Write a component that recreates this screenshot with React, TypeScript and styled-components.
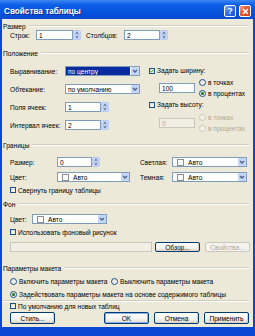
import styled, { createGlobalStyle } from 'styled-components';

const GlobalStyle = createGlobalStyle`
  html, body {
    margin: 0;
    padding: 0;
    background: #fff;
  }
`;

const Window = styled.div`
  width: 255px;
  height: 336px;
  display: flex;
  flex-direction: column;
  background: #0a47d2;
  overflow: hidden;
  font-family: 'Liberation Sans', Arial, sans-serif;
  font-size: 6.6px;
  color: #000;
`;

const TitleBar = styled.div`
  height: 19px;
  flex: none;
  box-sizing: border-box;
  display: flex;
  align-items: center;
  gap: 3px;
  padding: 3px 4px 0 4px;
  background: linear-gradient(#3d86f4 0%, #0d5fe7 25%, #0554de 60%, #0a4bd2 100%);
`;

const Title = styled.span`
  flex: 1;
  color: #fff;
  font-weight: bold;
  font-size: 8.2px;
  text-shadow: 1px 1px 0 #0a2a8a;
`;

const CaptionButton = styled.div<{ $close?: boolean }>`
  width: 12px;
  height: 12px;
  box-sizing: border-box;
  border: 1px solid #fff;
  border-radius: 2px;
  background: ${({ $close }) =>
    $close
      ? 'linear-gradient(135deg, #f2a088 0%, #e35a36 45%, #c7391a 100%)'
      : 'linear-gradient(135deg, #8ab6ff 0%, #2f6fe9 45%, #1552d6 100%)'};
  display: flex;
  align-items: center;
  justify-content: center;
  color: #fff;
  font-weight: bold;
  font-size: 9px;
  line-height: 1;
`;

// 본문: 좌우/하단 파란 프레임은 Window 배경이 비쳐 보이도록 margin으로 처리
const Body = styled.div`
  flex: 1;
  margin: 0 2px 9px 2px;
  padding: 3px 4px 0 1px;
  background: #ece9d8;
  display: flex;
  flex-direction: column;
`;

const GroupHeader = styled.div<{ $mt: number }>`
  height: 8px;
  margin-top: ${({ $mt }) => $mt}px;
  display: flex;
  align-items: center;
  gap: 3px;
  white-space: nowrap;

  &::after {
    content: '';
    flex: 1;
    border-top: 1px solid #d0cfbf;
    border-bottom: 1px solid #fff;
  }
`;

const Separator = styled.div<{ $mt: number }>`
  margin-top: ${({ $mt }) => $mt}px;
  border-top: 1px solid #d0cfbf;
  border-bottom: 1px solid #fff;
`;

const Row = styled.div<{ $mt?: number; $h: number; $indent?: number }>`
  height: ${({ $h }) => $h}px;
  margin-top: ${({ $mt }) => $mt ?? 0}px;
  padding-left: ${({ $indent }) => $indent ?? 7}px;
  display: flex;
  align-items: center;
  white-space: nowrap;
`;

const Label = styled.span<{ $w?: number; $disabled?: boolean }>`
  width: ${({ $w }) => ($w ? `${$w}px` : 'auto')};
  flex: none;
  color: ${({ $disabled }) => ($disabled ? '#aca899' : '#000')};
`;

const FormGrid = styled.div<{ $cols: string; $gap: number; $mt: number }>`
  margin-top: ${({ $mt }) => $mt}px;
  padding-left: 7px;
  display: grid;
  grid-template-columns: ${({ $cols }) => $cols};
  grid-auto-rows: 10px;
  row-gap: ${({ $gap }) => $gap}px;
  align-items: center;
  white-space: nowrap;
`;

const PositionSection = styled.div`
  margin-top: 9px;
  display: flex;
  align-items: flex-start;
`;

const SideColumn = styled.div`
  margin-left: 9px;
  display: flex;
  flex-direction: column;
`;

const SizeBlock = styled.div<{ $mt: number }>`
  height: 22px;
  margin-top: ${({ $mt }) => $mt}px;
  padding-left: 10px;
  display: flex;
  align-items: center;
  gap: 4px;
`;

const RadioStack = styled.div`
  display: flex;
  flex-direction: column;
`;

const TextBox = styled.div<{ $w: number; $disabled?: boolean }>`
  width: ${({ $w }) => $w}px;
  height: 10px;
  flex: none;
  box-sizing: border-box;
  border: 1px solid ${({ $disabled }) => ($disabled ? '#c9c7ba' : '#7f9db9')};
  background: ${({ $disabled }) => ($disabled ? '#f1efe4' : '#fff')};
  color: ${({ $disabled }) => ($disabled ? '#aca899' : '#000')};
  padding-left: 2px;
  display: flex;
  align-items: center;
  white-space: nowrap;
`;

const NumberWrap = styled.div`
  display: flex;
  align-items: center;
  flex: none;
`;

const SpinnerIcon = () => (
  <svg width="8" height="10" viewBox="0 0 8 10">
    <rect x="0.5" y="0.5" width="7" height="4.3" rx="1.2" fill="#c9d8fb" stroke="#b2c6f0" />
    <rect x="0.5" y="5.2" width="7" height="4.3" rx="1.2" fill="#c9d8fb" stroke="#b2c6f0" />
    <path d="M2.2 3.6 L4 1.8 L5.8 3.6 Z" fill="#4d6185" />
    <path d="M2.2 6.4 L4 8.2 L5.8 6.4 Z" fill="#4d6185" />
  </svg>
);

const NumberField = ({ value, width }: { value: string; width: number }) => (
  <NumberWrap>
    <TextBox $w={width}>{value}</TextBox>
    <SpinnerIcon />
  </NumberWrap>
);

const SelectBox = styled.div<{ $w: number }>`
  width: ${({ $w }) => $w}px;
  height: 10px;
  flex: none;
  box-sizing: border-box;
  border: 1px solid #7f9db9;
  background: #fff;
  display: flex;
  align-items: stretch;
`;

const SelectValue = styled.div<{ $selected?: boolean }>`
  flex: 1;
  margin: 0 1px 0 0;
  padding-left: 2px;
  display: flex;
  align-items: center;
  gap: 4px;
  background: ${({ $selected }) => ($selected ? '#0b2ba0' : 'transparent')};
  color: ${({ $selected }) => ($selected ? '#fff' : '#000')};
  white-space: nowrap;
  overflow: hidden;
`;

const Swatch = styled.span`
  width: 5px;
  height: 5px;
  margin-left: 2px;
  border: 1px solid #8d8d8d;
  background: #fff;
  flex: none;
`;

const DropIcon = () => (
  <svg width="8" height="8" viewBox="0 0 8 8">
    <rect x="0.3" y="0.3" width="7.4" height="7.4" rx="1.2" fill="#c4d5fa" stroke="#b7c9f1" strokeWidth="0.6" />
    <path d="M2 3 L4 5 L6 3" fill="none" stroke="#4d6185" strokeWidth="1.3" />
  </svg>
);

const Select = ({ value, width, selected }: { value: string; width: number; selected?: boolean }) => (
  <SelectBox $w={width}>
    <SelectValue $selected={selected}>{value}</SelectValue>
    <DropIcon />
  </SelectBox>
);

const ColorSelect = ({ width }: { width: number }) => (
  <SelectBox $w={width}>
    <SelectValue>
      <Swatch />
      Авто
    </SelectValue>
    <DropIcon />
  </SelectBox>
);

const CheckBox = styled.span`
  width: 6px;
  height: 6px;
  flex: none;
  box-sizing: border-box;
  border: 1px solid #1c5180;
  background: linear-gradient(135deg, #dcdcd7, #fff);
  margin-right: 2px;
  display: flex;
  align-items: center;
  justify-content: center;
`;

const Check = ({ label, checked }: { label: string; checked?: boolean }) => (
  <>
    <CheckBox>
      {checked && (
        <svg width="4" height="4" viewBox="0 0 4 4">
          <path d="M0.4 2 L1.5 3.1 L3.6 0.7" fill="none" stroke="#21a121" strokeWidth="1" />
        </svg>
      )}
    </CheckBox>
    <Label>{label}</Label>
  </>
);

const RadioCircle = styled.span<{ $checked?: boolean; $disabled?: boolean }>`
  width: 7px;
  height: 7px;
  flex: none;
  box-sizing: border-box;
  border-radius: 50%;
  border: 1px solid ${({ $disabled }) => ($disabled ? '#cac8bb' : '#1c5180')};
  background: ${({ $disabled }) => ($disabled ? '#f3f2ea' : 'linear-gradient(135deg, #dcdcd7, #fff)')};
  margin-right: 2px;
  display: flex;
  align-items: center;
  justify-content: center;

  &::after {
    content: '';
    width: 3px;
    height: 3px;
    border-radius: 50%;
    background: ${({ $checked }) => ($checked ? '#1f6f1f' : 'transparent')};
  }
`;

const RadioOption = styled.div<{ $w?: number; $h?: number }>`
  width: ${({ $w }) => ($w ? `${$w}px` : 'auto')};
  height: ${({ $h }) => ($h ? `${$h}px` : 'auto')};
  display: flex;
  align-items: center;
  white-space: nowrap;
`;

const Radio = ({
  label,
  checked,
  disabled,
  width,
  height,
}: {
  label: string;
  checked?: boolean;
  disabled?: boolean;
  width?: number;
  height?: number;
}) => (
  <RadioOption $w={width} $h={height}>
    <RadioCircle $checked={checked} $disabled={disabled} />
    <Label $disabled={disabled}>{label}</Label>
  </RadioOption>
);

const PushButton = styled.button<{ $h: number; $default?: boolean }>`
  width: 45px;
  height: ${({ $h }) => $h}px;
  flex: none;
  box-sizing: border-box;
  padding: 0;
  margin: 0;
  font: inherit;
  color: #000;
  border: 1px solid #003c74;
  border-radius: 2px;
  background: linear-gradient(#ffffff 0%, #f4f3ee 60%, #dcd8cf 100%);
  box-shadow: ${({ $default }) => ($default ? 'inset 0 0 0 1px #8cb0f0' : 'inset -1px -1px 0 #d6d0c5')};
  display: flex;
  align-items: center;
  justify-content: center;

  &:disabled {
    color: #aca899;
    border-color: #c9c7ba;
    background: #f4f3ee;
    box-shadow: none;
  }
`;

const ButtonGroup = styled.div`
  display: flex;
  gap: 5px;
  margin-left: auto;
`;

const FieldRow = styled(Row)`
  gap: 3px;
`;

const App = () => {
  return (
    <>
      <GlobalStyle />
      <Window>
        <TitleBar>
          <Title>Свойства таблицы</Title>
          <CaptionButton>?</CaptionButton>
          <CaptionButton $close>
            <svg width="7" height="7" viewBox="0 0 7 7">
              <path d="M1 1 L6 6 M6 1 L1 6" stroke="#fff" strokeWidth="1.6" />
            </svg>
          </CaptionButton>
        </TitleBar>

        <Body>
          <GroupHeader $mt={0}>Размер</GroupHeader>
          <Row $h={10}>
            <Label $w={26}>Строк:</Label>
            <NumberField value="1" width={37} />
            <Label $w={38} style={{ marginLeft: 5 }}>
              Столбцов:
            </Label>
            <NumberField value="2" width={36} />
          </Row>

          <GroupHeader $mt={9}>Положение</GroupHeader>
          <PositionSection>
            <FormGrid $cols="55px 75px" $gap={8} $mt={0}>
              <Label>Выравнивание:</Label>
              <Select value="по центру" width={75} selected />
              <Label>Обтекание:</Label>
              <Select value="по умолчанию" width={75} />
              <Label>Поля ячеек:</Label>
              <NumberField value="1" width={36} />
              <Label>Интервал ячеек:</Label>
              <NumberField value="2" width={36} />
            </FormGrid>

            <SideColumn>
              <Row $h={9} $indent={0}>
                <Check label="Задать ширину:" checked />
              </Row>
              <SizeBlock $mt={2}>
                <TextBox $w={36}>100</TextBox>
                <RadioStack>
                  <Radio label="в точках" height={11} />
                  <Radio label="в процентах" height={11} checked />
                </RadioStack>
              </SizeBlock>
              <Row $h={9} $mt={1} $indent={0}>
                <Check label="Задать высоту:" />
              </Row>
              <SizeBlock $mt={3}>
                <TextBox $w={36} $disabled>
                  0
                </TextBox>
                <RadioStack>
                  <Radio label="в точках" height={11} disabled />
                  <Radio label="в процентах" height={11} disabled />
                </RadioStack>
              </SizeBlock>
            </SideColumn>
          </PositionSection>

          <GroupHeader $mt={7}>Границы</GroupHeader>
          <FormGrid $cols="47px 83px 32px 75px" $gap={5} $mt={8}>
            <Label>Размер:</Label>
            <NumberField value="0" width={35} />
            <Label>Светлая:</Label>
            <ColorSelect width={75} />
            <Label>Цвет:</Label>
            <ColorSelect width={73} />
            <Label>Темная:</Label>
            <ColorSelect width={75} />
          </FormGrid>
          <Row $h={8} $mt={4}>
            <Check label="Свернуть границу таблицы" />
          </Row>

          <GroupHeader $mt={6}>Фон</GroupHeader>
          <Row $h={10} $mt={6}>
            <Label $w={22}>Цвет:</Label>
            <ColorSelect width={75} />
          </Row>
          <Row $h={8} $mt={4}>
            <Check label="Использовать фоновый рисунок" />
          </Row>
          <FieldRow $h={10} $mt={6}>
            <TextBox $w={142} $disabled />
            <PushButton $h={10}>Обзор...</PushButton>
            <PushButton $h={10} disabled style={{ marginLeft: 2 }}>
              Свойства...
            </PushButton>
          </FieldRow>

          <GroupHeader $mt={12}>Параметры макета</GroupHeader>
          <Row $h={10} $mt={4}>
            <Radio label="Включить параметры макета" width={101} />
            <Radio label="Выключить параметры макета" />
          </Row>
          <Row $h={10} $mt={3}>
            <Radio label="Задействовать параметры макета на основе содержимого таблицы" checked />
          </Row>

          <Separator $mt={1} />
          <Row $h={8}>
            <Check label="По умолчанию для новых таблиц" />
          </Row>
          <Row $h={12} $mt={2}>
            <PushButton $h={12}>Стиль...</PushButton>
            <ButtonGroup>
              <PushButton $h={12} $default>
                OK
              </PushButton>
              <PushButton $h={12}>Отмена</PushButton>
              <PushButton $h={12}>Применить</PushButton>
            </ButtonGroup>
          </Row>
        </Body>
      </Window>
    </>
  );
};

export default App;
